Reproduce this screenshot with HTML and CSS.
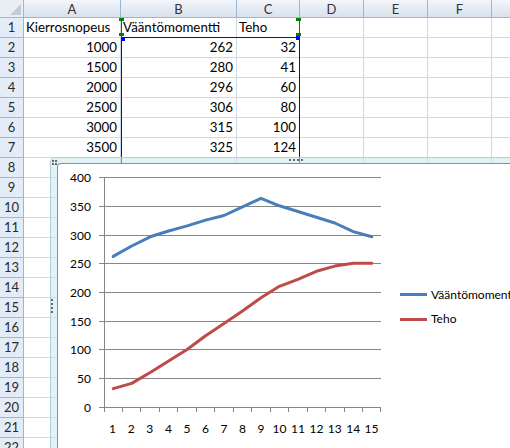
FILE: index.html
```html
<!DOCTYPE html>
<html>
<head>
<meta charset="utf-8">
<link rel="stylesheet" href="styles.css">
</head>
<body>
<div class="sheet">
  <div class="row hdr"><div class="corner"></div><div class="ch">A</div><div class="ch">B</div><div class="ch">C</div><div class="ch">D</div><div class="ch">E</div><div class="ch">F</div><div class="ch"></div></div>
  <div class="row"><div class="rh">1</div><div class="c">Kierrosnopeus</div><div class="c">Vääntömomentti</div><div class="c">Teho</div><div class="c"></div><div class="c"></div><div class="c"></div><div class="c"></div></div>
  <div class="row"><div class="rh">2</div><div class="c n">1000</div><div class="c n">262</div><div class="c n">32</div><div class="c"></div><div class="c"></div><div class="c"></div><div class="c"></div></div>
  <div class="row"><div class="rh">3</div><div class="c n">1500</div><div class="c n">280</div><div class="c n">41</div><div class="c"></div><div class="c"></div><div class="c"></div><div class="c"></div></div>
  <div class="row"><div class="rh">4</div><div class="c n">2000</div><div class="c n">296</div><div class="c n">60</div><div class="c"></div><div class="c"></div><div class="c"></div><div class="c"></div></div>
  <div class="row"><div class="rh">5</div><div class="c n">2500</div><div class="c n">306</div><div class="c n">80</div><div class="c"></div><div class="c"></div><div class="c"></div><div class="c"></div></div>
  <div class="row"><div class="rh">6</div><div class="c n">3000</div><div class="c n">315</div><div class="c n">100</div><div class="c"></div><div class="c"></div><div class="c"></div><div class="c"></div></div>
  <div class="row"><div class="rh">7</div><div class="c n">3500</div><div class="c n">325</div><div class="c n">124</div><div class="c"></div><div class="c"></div><div class="c"></div><div class="c"></div></div>
  <div class="row"><div class="rh">8</div><div class="c"></div><div class="c"></div><div class="c"></div><div class="c"></div><div class="c"></div><div class="c"></div><div class="c"></div></div>
  <div class="row"><div class="rh">9</div><div class="c"></div><div class="c"></div><div class="c"></div><div class="c"></div><div class="c"></div><div class="c"></div><div class="c"></div></div>
  <div class="row"><div class="rh">10</div><div class="c"></div><div class="c"></div><div class="c"></div><div class="c"></div><div class="c"></div><div class="c"></div><div class="c"></div></div>
  <div class="row"><div class="rh">11</div><div class="c"></div><div class="c"></div><div class="c"></div><div class="c"></div><div class="c"></div><div class="c"></div><div class="c"></div></div>
  <div class="row"><div class="rh">12</div><div class="c"></div><div class="c"></div><div class="c"></div><div class="c"></div><div class="c"></div><div class="c"></div><div class="c"></div></div>
  <div class="row"><div class="rh">13</div><div class="c"></div><div class="c"></div><div class="c"></div><div class="c"></div><div class="c"></div><div class="c"></div><div class="c"></div></div>
  <div class="row"><div class="rh">14</div><div class="c"></div><div class="c"></div><div class="c"></div><div class="c"></div><div class="c"></div><div class="c"></div><div class="c"></div></div>
  <div class="row"><div class="rh">15</div><div class="c"></div><div class="c"></div><div class="c"></div><div class="c"></div><div class="c"></div><div class="c"></div><div class="c"></div></div>
  <div class="row"><div class="rh">16</div><div class="c"></div><div class="c"></div><div class="c"></div><div class="c"></div><div class="c"></div><div class="c"></div><div class="c"></div></div>
  <div class="row"><div class="rh">17</div><div class="c"></div><div class="c"></div><div class="c"></div><div class="c"></div><div class="c"></div><div class="c"></div><div class="c"></div></div>
  <div class="row"><div class="rh">18</div><div class="c"></div><div class="c"></div><div class="c"></div><div class="c"></div><div class="c"></div><div class="c"></div><div class="c"></div></div>
  <div class="row"><div class="rh">19</div><div class="c"></div><div class="c"></div><div class="c"></div><div class="c"></div><div class="c"></div><div class="c"></div><div class="c"></div></div>
  <div class="row"><div class="rh">20</div><div class="c"></div><div class="c"></div><div class="c"></div><div class="c"></div><div class="c"></div><div class="c"></div><div class="c"></div></div>
  <div class="row"><div class="rh">21</div><div class="c"></div><div class="c"></div><div class="c"></div><div class="c"></div><div class="c"></div><div class="c"></div><div class="c"></div></div>
  <div class="row"><div class="rh">22</div><div class="c"></div><div class="c"></div><div class="c"></div><div class="c"></div><div class="c"></div><div class="c"></div><div class="c"></div></div>
</div>

<div class="sel-blue"></div>
<div class="sel-green"></div>
<div class="handle green h-g1"></div>
<div class="handle green h-g2"></div>
<div class="handle green h-g3"></div>
<div class="handle green h-g4"></div>
<div class="handle blue h-b1"></div>
<div class="handle blue h-b2"></div>

<div class="chart">
  <div class="plot">
    <svg class="graph" width="452" height="290" viewBox="58 164 452 290">
      <path class="grid" d="M99 177.5H381M99 206.5H381M99 235.5H381M99 263.5H381M99 292.5H381M99 321.5H381M99 349.5H381M99 378.5H381"/>
      <path class="axis" d="M104.5 177V408M99 407.5H381M104.5 407V412M122.5 407V412M140.5 407V412M159.5 407V412M177.5 407V412M196.5 407V412M214.5 407V412M233.5 407V412M251.5 407V412M270.5 407V412M288.5 407V412M307.5 407V412M325.5 407V412M344.5 407V412M362.5 407V412M380.5 407V412"/>
      <g class="ylab">
        <text x="91" y="181.5">400</text>
        <text x="91" y="210.5">350</text>
        <text x="91" y="239.5">300</text>
        <text x="91" y="267.5">250</text>
        <text x="91" y="296.5">200</text>
        <text x="91" y="325.5">150</text>
        <text x="91" y="353.5">100</text>
        <text x="91" y="382.5">50</text>
        <text x="91" y="411.5">0</text>
      </g>
      <g class="xlab">
        <text x="112.5" y="433">1</text>
        <text x="131.2" y="433">2</text>
        <text x="149.8" y="433">3</text>
        <text x="168.4" y="433">4</text>
        <text x="187" y="433">5</text>
        <text x="205.5" y="433">6</text>
        <text x="224" y="433">7</text>
        <text x="242.5" y="433">8</text>
        <text x="261" y="433">9</text>
        <text x="279.4" y="433">10</text>
        <text x="297.9" y="433">11</text>
        <text x="316.4" y="433">12</text>
        <text x="334.8" y="433">13</text>
        <text x="353.3" y="433">14</text>
        <text x="371.5" y="433">15</text>
      </g>
      <polyline class="s-blue" points="113.2,256.4 131.7,246 150.2,236.8 168.6,231 187.1,225.9 205.6,220.1 224,215.5 242.5,206.9 261,198.3 279.4,205.8 297.9,211.5 316.4,217.3 334.8,223 353.3,231.6 371.8,236.8"/>
      <polyline class="s-red" points="113.2,388.6 131.7,383.4 150.2,372.5 168.6,361 187.1,349.5 205.6,335.7 224,323.6 242.5,311 261,297.8 279.4,286.3 297.9,279.4 316.4,271.3 334.8,266.1 353.3,263.3 371.8,263.3"/>
      <path class="s-blue" d="M400 294.5H427"/>
      <path class="s-red" d="M400 319.5H427"/>
      <text class="leg" x="431" y="298.5">Vääntömomentti</text>
      <text class="leg" x="431" y="323">Teho</text>
    </svg>
  </div>
  <div class="dots dots-tl"><span></span><span></span><span></span><span></span></div>
  <div class="dots dots-top"><span></span><span></span><span></span><span></span></div>
  <div class="dots dots-left"><span></span><span></span><span></span><span></span></div>
</div>
</body>
</html>
```

FILE: styles.css
```css
html, body {
  margin: 0;
  padding: 0;
  background: #fff;
}
body {
  width: 510px;
  height: 448px;
  overflow: hidden;
  position: relative;
  font-family: Lato, "Liberation Sans", sans-serif;
  font-size: 13.3px;
  color: #000;
}
.sheet {
  display: flex;
  flex-direction: column;
}
.row {
  display: grid;
  grid-template-columns: 24px 97px 116px 63px 64px 64px 64px 64px;
  height: 20px;
}
.row.hdr {
  height: 18px;
}
.row > div {
  box-sizing: border-box;
  white-space: nowrap;
  overflow: hidden;
}
.corner {
  position: relative;
  background: #e9eef5;
  border-right: 1px solid #9eb6ce;
  border-bottom: 1px solid #9eb6ce;
}
.corner::after {
  content: "";
  position: absolute;
  right: 2px;
  bottom: 2px;
  width: 0;
  height: 0;
  border-left: 11px solid transparent;
  border-bottom: 11px solid #c3ccd9;
}
.ch {
  background: linear-gradient(#f3f6fb, #e3e9f2 60%, #d9e1ec);
  border-right: 1px solid #9eb6ce;
  border-bottom: 1px solid #9eb6ce;
  text-align: center;
  line-height: 18px;
  font-size: 13px;
  color: #333;
}
.rh {
  background: #e4ecf7;
  border-right: 1px solid #9eb6ce;
  border-bottom: 1px solid #9eb6ce;
  text-align: center;
  line-height: 19px;
  font-size: 13px;
  color: #2a2a2a;
}
.c {
  border-right: 1px solid #d0d7e5;
  border-bottom: 1px solid #d0d7e5;
  padding: 0 3px 0 2px;
  line-height: 19px;
}
.c.n {
  text-align: right;
}

/* range selection overlays */
.sel-blue {
  position: absolute;
  left: 121px;
  top: 37px;
  width: 179px;
  height: 128px;
  box-sizing: border-box;
  border: 1px solid #0000ff;
  border-bottom: none;
}
.sel-green {
  position: absolute;
  left: 121px;
  top: 18px;
  width: 179px;
  height: 19px;
  box-sizing: border-box;
  border-left: 1px solid #008000;
  border-right: 1px solid #008000;
}
.handle {
  position: absolute;
}
.handle.green {
  width: 5px;
  height: 3px;
  background: #008000;
}
.handle.blue {
  width: 4px;
  height: 4px;
  background: #0000ff;
}
.h-g1 { left: 119px; top: 18px; }
.h-g2 { left: 119px; top: 33px; }
.h-g3 { left: 296px; top: 18px; }
.h-g4 { left: 296px; top: 33px; }
.h-b1 { left: 121px; top: 37px; }
.h-b2 { left: 296px; top: 36px; }

/* chart object */
.chart {
  position: absolute;
  left: 50px;
  top: 157px;
  width: 500px;
  height: 296px;
  box-sizing: border-box;
  border: 1px solid #b3cfd3;
  border-radius: 5px;
  background: rgba(200, 234, 238, 0.55);
  padding: 5px 0 0 6px;
}
.plot {
  height: 100%;
  box-sizing: border-box;
  border: 1px solid #8e8e8e;
  border-right: none;
  border-bottom: none;
  border-radius: 4px 0 0 0;
  background: #fff;
  overflow: hidden;
}
.graph {
  display: block;
}
.grid, .axis {
  fill: none;
  stroke: #868686;
  stroke-width: 1;
}
.graph text {
  font-family: Lato, "Liberation Sans", sans-serif;
  font-size: 12px;
  fill: #000;
}
.ylab text {
  text-anchor: end;
}
.xlab text {
  text-anchor: middle;
}
.s-blue, .s-red {
  fill: none;
  stroke-width: 3;
  stroke-linejoin: round;
  stroke-linecap: round;
}
.s-blue { stroke: #4a7ebb; }
.s-red { stroke: #be4b48; }
path.s-blue, path.s-red { stroke-linecap: butt; }

.dots {
  position: absolute;
  display: flex;
}
.dots span {
  width: 2px;
  height: 2px;
  background: #6a6a6a;
}
.dots-tl {
  left: 1px;
  top: 2px;
  width: 5px;
  flex-wrap: wrap;
  gap: 1px;
}
.dots-top {
  left: 238px;
  top: 1px;
  gap: 2px;
}
.dots-left {
  left: 0;
  top: 141px;
  flex-direction: column;
  gap: 2px;
}
```
